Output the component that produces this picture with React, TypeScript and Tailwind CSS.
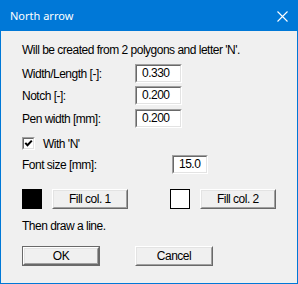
import React from "react";

function Sunken({ className, children }: { className: string; children?: React.ReactNode }) {
  return (
    <div className={`border border-t-[#a0a0a0] border-l-[#a0a0a0] border-r-white border-b-white ${className}`}>
      <div className="h-full w-full border border-t-[#696969] border-l-[#696969] border-r-[#e3e3e3] border-b-[#e3e3e3] bg-white">
        {children}
      </div>
    </div>
  );
}

function Field({ value, className }: { value: string; className: string }) {
  return (
    <Sunken className={`h-[19px] ${className}`}>
      <div className="pl-[5px] text-[12px] leading-[15px]">{value}</div>
    </Sunken>
  );
}

function Button({ label, isDefault, className }: { label: string; isDefault?: boolean; className: string }) {
  const face = (
    <div className="h-full w-full border border-t-white border-l-white border-r-[#696969] border-b-[#696969]">
      <div className="flex h-full w-full items-center justify-center border border-t-[#e3e3e3] border-l-[#e3e3e3] border-r-[#a0a0a0] border-b-[#a0a0a0] bg-[#f0f0f0] text-[12px]">
        {label}
      </div>
    </div>
  );
  if (isDefault) {
    return <div className={`h-[20px] border border-[#696969] ${className}`}>{face}</div>;
  }
  return <div className={`h-[20px] ${className}`}>{face}</div>;
}

function Row({ label, value }: { label: string; value: string }) {
  return (
    <div className="flex h-[19px] items-center">
      <div className="w-[113px]">{label}</div>
      <Field value={value} className="w-[47px]" />
    </div>
  );
}

export default function App() {
  return (
    <div
      className="h-[284px] w-[298px] border border-[#0078d7] bg-[#f0f0f0] text-[12px] tracking-[-0.5px] text-black"
      style={{ fontFamily: '"Liberation Sans", Arial, sans-serif' }}
    >
      {/* title bar */}
      <div className="flex h-[30px] items-center justify-between bg-[#0078d7] pl-[9px] pr-[9px] text-white">
        <span className="text-[11px] tracking-normal" style={{ fontFamily: '"Noto Sans", sans-serif' }}>
          North arrow
        </span>
        <svg width="11" height="11" viewBox="0 0 11 11" className="mt-[1px]">
          <path d="M0.5 0.5 L10.5 10.5 M10.5 0.5 L0.5 10.5" stroke="white" strokeWidth="1.1" />
        </svg>
      </div>

      <div className="px-[21px]">
        <div className="mt-[12px] flex h-[14px] items-center">Will be created from 2 polygons and letter 'N'.</div>

        <div className="mt-[7px]">
          <Row label="Width/Length [-]:" value="0.330" />
        </div>
        <div className="mt-[3px]">
          <Row label="Notch [-]:" value="0.200" />
        </div>
        <div className="mt-[4px]">
          <Row label="Pen width [mm]:" value="0.200" />
        </div>

        <div className="mt-[9px] flex h-[13px] items-center">
          <Sunken className="h-[13px] w-[13px]">
            <svg width="9" height="9" viewBox="0 0 9 9" className="block">
              <path d="M1.3 3.8 L3.5 6.3 L7.8 1.6" stroke="black" strokeWidth="2" fill="none" />
            </svg>
          </Sunken>
          <span className="ml-[8px]">With 'N'</span>
        </div>

        <div className="mt-[5px] flex h-[19px] items-center">
          <div className="w-[150px]">Font size [mm]:</div>
          <Field value="15.0" className="w-[36px]" />
        </div>

        <div className="mt-[15px] flex h-[20px] items-center">
          <div className="h-[20px] w-[20px] border border-black bg-black" />
          <Button label="Fill col. 1" className="ml-[10px] w-[78px]" />
          <div className="ml-[42px] h-[20px] w-[20px] border border-black bg-white" />
          <Button label="Fill col. 2" className="ml-[10px] w-[78px]" />
        </div>

        <div className="mt-[10px] flex h-[14px] items-center">Then draw a line.</div>

        <div className="mt-[13px] flex h-[20px] items-center">
          <Button label="OK" isDefault className="w-[78px]" />
          <Button label="Cancel" className="ml-[35px] w-[78px]" />
        </div>
      </div>
    </div>
  );
}
